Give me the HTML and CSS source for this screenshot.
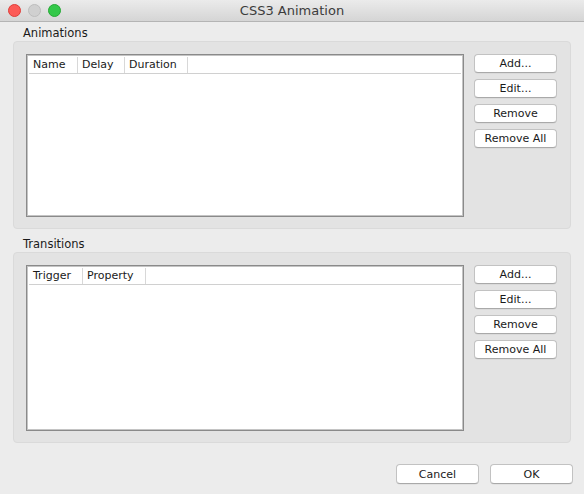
FILE: index.html
```html
<!DOCTYPE html>
<html>
<head>
<meta charset="utf-8">
<link rel="stylesheet" href="styles.css">
</head>
<body>
<div class="window">
  <div class="titlebar">
    <div class="lights">
      <span class="light red"></span>
      <span class="light gray"></span>
      <span class="light green"></span>
    </div>
    <div class="title">CSS3 Animation</div>
  </div>
  <div class="content">
    <div class="section-label">Animations</div>
    <div class="group group-anim">
      <div class="table">
        <div class="thead">
          <div class="th w-name">Name</div>
          <div class="th w-delay">Delay</div>
          <div class="th w-duration">Duration</div>
          <div class="th last"></div>
        </div>
      </div>
      <div class="buttons">
        <button class="btn">Add...</button>
        <button class="btn">Edit...</button>
        <button class="btn">Remove</button>
        <button class="btn">Remove All</button>
      </div>
    </div>
    <div class="section-label label2">Transitions</div>
    <div class="group group-trans">
      <div class="table">
        <div class="thead">
          <div class="th w-trigger">Trigger</div>
          <div class="th w-property">Property</div>
          <div class="th last"></div>
        </div>
      </div>
      <div class="buttons">
        <button class="btn">Add...</button>
        <button class="btn">Edit...</button>
        <button class="btn">Remove</button>
        <button class="btn">Remove All</button>
      </div>
    </div>
    <div class="footer">
      <button class="btn btn-foot">Cancel</button>
      <button class="btn btn-foot">OK</button>
    </div>
  </div>
</div>
</body>
</html>
```

FILE: styles.css
```css
html, body {
  margin: 0;
  padding: 0;
}
body {
  width: 584px;
  height: 494px;
  overflow: hidden;
  background: #ececec;
  font-family: "DejaVu Sans", "Liberation Sans", sans-serif;
  font-size: 11px;
  color: #1a1a1a;
}
.window {
  width: 584px;
  height: 494px;
  display: flex;
  flex-direction: column;
}
.titlebar {
  height: 22px;
  box-sizing: border-box;
  border-bottom: 1px solid #b4b4b4;
  background: linear-gradient(#ebebeb, #d5d5d5);
  display: flex;
  align-items: center;
  position: relative;
}
.lights {
  display: flex;
  gap: 7px;
  padding-left: 8px;
}
.light {
  width: 13px;
  height: 13px;
  border-radius: 50%;
  box-sizing: border-box;
}
.light.red { background: #fc5b57; border: 1px solid #df3e39; }
.light.gray { background: #d0d0d0; border: 1px solid #bdbdbd; }
.light.green { background: #34c84a; border: 1px solid #24a934; }
.title {
  position: absolute;
  left: 0;
  right: 0;
  top: 0;
  height: 22px;
  line-height: 22px;
  text-align: center;
  font-size: 13px;
  color: #3c3c3c;
}
.content {
  flex: 1;
  display: flex;
  flex-direction: column;
  padding: 0 13px 0 13px;
}
.section-label {
  height: 19px;
  line-height: 22px;
  padding-left: 10px;
  font-size: 11.5px;
}
.label2 {
  margin-top: 4px;
}
.group {
  background: #e3e3e3;
  border: 1px solid #dadada;
  border-radius: 4px;
  display: flex;
  gap: 10px;
  padding: 12px 13px 11px 12px;
  box-sizing: border-box;
}
.group-anim { height: 188px; }
.group-trans { height: 191px; }
.table {
  flex: 1;
  background: #fff;
  border: 1px solid #8a8a8a;
  box-shadow: inset 1px 1px 0 #c4c4c4, inset -1px -1px 0 #c4c4c4;
  padding: 2px;
}
.thead {
  display: flex;
  height: 16px;
  border-bottom: 1px solid #d0d0d0;
}
.th {
  height: 16px;
  line-height: 16px;
  padding-left: 4px;
  border-right: 1px solid #d8d8d8;
  box-sizing: border-box;
  white-space: nowrap;
}
.th.last { border-right: none; flex: 1; }
.w-name { width: 49px; }
.w-delay { width: 47px; }
.w-duration { width: 63px; }
.w-trigger { width: 54px; }
.w-property { width: 63px; }
.buttons {
  width: 83px;
  display: flex;
  flex-direction: column;
  gap: 6px;
}
.btn {
  font-family: "DejaVu Sans", "Liberation Sans", sans-serif;
  font-size: 11px;
  color: #1a1a1a;
  background: #fff;
  border: 1px solid #c2c2c2;
  border-bottom-color: #a9a9a9;
  border-radius: 4px;
  height: 19px;
  padding: 0;
  line-height: 17px;
  text-align: center;
  box-shadow: 0 0.5px 0.5px rgba(0,0,0,0.08);
}
.footer {
  display: flex;
  justify-content: flex-end;
  gap: 11px;
  margin-top: 21px;
  margin-right: -2px;
}
.btn-foot {
  width: 83px;
  height: 20px;
}
```
